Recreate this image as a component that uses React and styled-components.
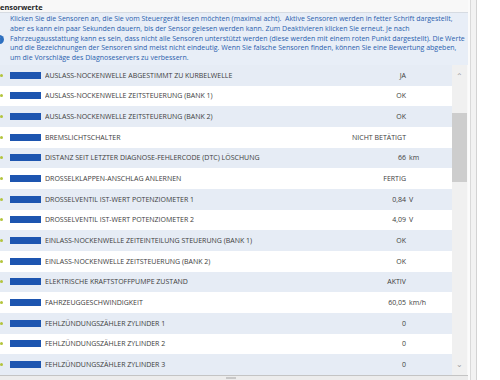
import React from "react";
import styled, { createGlobalStyle } from "styled-components";

const GlobalStyle = createGlobalStyle`
  html, body {
    margin: 0;
    padding: 0;
    width: 500px;
    height: 380px;
    overflow: hidden;
    background: #f3f3f3;
  }
  * { box-sizing: border-box; }
`;

const infoLines = [
  "Klicken Sie die Sensoren an, die Sie vom Steuergerät lesen möchten (maximal acht).\u00a0 Aktive Sensoren werden in fetter Schrift dargestellt,",
  "aber es kann ein paar Sekunden dauern, bis der Sensor gelesen werden kann. Zum Deaktivieren klicken Sie erneut. Je nach",
  "Fahrzeugausstattung kann es sein, dass nicht alle Sensoren unterstützt werden (diese werden mit einem roten Punkt dargestellt). Die Werte",
  "und die Bezeichnungen der Sensoren sind meist nicht eindeutig. Wenn Sie falsche Sensoren finden, können Sie eine Bewertung abgeben,",
  "um die Vorschläge des Diagnoseservers zu verbessern.",
];

const sensors = [
  { name: "AUSLASS-NOCKENWELLE ABGESTIMMT ZU KURBELWELLE", value: "JA" },
  { name: "AUSLASS-NOCKENWELLE ZEITSTEUERUNG (BANK 1)", value: "OK" },
  { name: "AUSLASS-NOCKENWELLE ZEITSTEUERUNG (BANK 2)", value: "OK" },
  { name: "BREMSLICHTSCHALTER", value: "NICHT BETÄTIGT" },
  { name: "DISTANZ SEIT LETZTER DIAGNOSE-FEHLERCODE (DTC) LÖSCHUNG", value: "66", unit: "km" },
  { name: "DROSSELKLAPPEN-ANSCHLAG ANLERNEN", value: "FERTIG" },
  { name: "DROSSELVENTIL IST-WERT POTENZIOMETER 1", value: "0,84", unit: "V" },
  { name: "DROSSELVENTIL IST-WERT POTENZIOMETER 2", value: "4,09", unit: "V" },
  { name: "EINLASS-NOCKENWELLE ZEITEINTEILUNG STEUERUNG (BANK 1)", value: "OK" },
  { name: "EINLASS-NOCKENWELLE ZEITSTEUERUNG (BANK 2)", value: "OK" },
  { name: "ELEKTRISCHE KRAFTSTOFFPUMPE ZUSTAND", value: "AKTIV" },
  { name: "FAHRZEUGGESCHWINDIGKEIT", value: "60,05", unit: "km/h" },
  { name: "FEHLZÜNDUNGSZÄHLER ZYLINDER 1", value: "0" },
  { name: "FEHLZÜNDUNGSZÄHLER ZYLINDER 2", value: "0" },
  { name: "FEHLZÜNDUNGSZÄHLER ZYLINDER 3", value: "0" },
];

const App = () => {
  return (
    <>
      <GlobalStyle />
      <Page>
        <Main>
          <Header>Sensorwerte</Header>
          <InfoBox>
            <InfoIcon viewBox="0 0 10 10">
              <circle cx="5" cy="5" r="5" fill="#2d6fc0" />
              <rect x="4.4" y="4.2" width="1.2" height="3.6" fill="#fff" />
              <circle cx="5" cy="2.8" r="0.7" fill="#fff" />
            </InfoIcon>
            <InfoText>
              {infoLines.map((line) => (
                <InfoLine key={line}>{line}</InfoLine>
              ))}
            </InfoText>
          </InfoBox>
          <TableArea>
            <Rows>
              {sensors.map((s, i) => (
                <Row key={s.name} $alt={i % 2 === 0}>
                  <Dot />
                  <Bar />
                  <Label>{s.name}</Label>
                  <Value>{s.value}</Value>
                  <Unit>{s.unit}</Unit>
                </Row>
              ))}
            </Rows>
            <Scrollbar>
              <Arrow>&#8963;</Arrow>
              <Track>
                <Thumb />
              </Track>
              <Arrow $down>&#8964;</Arrow>
            </Scrollbar>
          </TableArea>
          <Footer>
            <Grip />
          </Footer>
        </Main>
        <Gutter />
        <SidePanel />
      </Page>
    </>
  );
};

export default App;

const Page = styled.div`
  display: flex;
  width: 506px;
  height: 380px;
  margin-left: -6px;
  font-family: "Open Sans", "Noto Sans", sans-serif;
`;

const Main = styled.div`
  display: flex;
  flex-direction: column;
  width: 474px;
  height: 380px;
  background: #f8f8f8;
`;

const Header = styled.div`
  height: 13px;
  padding-left: 2px;
  font-size: 7.4px;
  font-weight: bold;
  line-height: 15px;
  color: #1e1e1e;
  border-bottom: 1px solid #d6dbe2;
`;

const InfoBox = styled.div`
  display: flex;
  align-items: flex-start;
  height: 52px;
  background: #e8eef7;
  padding: 1px 0 0 1px;
`;

const InfoIcon = styled.svg`
  width: 9px;
  height: 9px;
  margin-top: 21px;
  flex-shrink: 0;
`;

const InfoText = styled.div`
  display: flex;
  flex-direction: column;
  margin-left: 6px;
  font-size: 7px;
  line-height: 9.8px;
  color: #2a5fae;
`;

const InfoLine = styled.div`
  white-space: nowrap;
`;

const TableArea = styled.div`
  display: flex;
  height: 310px;
`;

const Rows = styled.div`
  display: flex;
  flex-direction: column;
  width: 458px;
`;

const Row = styled.div`
  display: grid;
  grid-template-columns: 16px 35px 1fr 82px 46px;
  align-items: center;
  height: 20.67px;
  flex-shrink: 0;
  background: ${(p) => (p.$alt ? "#e6ecf5" : "#ffffff")};
  font-size: 7px;
  color: #3c3c3c;
`;

const Dot = styled.span`
  width: 3px;
  height: 3px;
  margin-left: 6px;
  border-radius: 50%;
  background: #b3c43c;
`;

const Bar = styled.span`
  width: 31px;
  height: 7px;
  background: #1d55b0;
`;

const Label = styled.span`
  white-space: nowrap;
  overflow: hidden;
`;

const Value = styled.span`
  text-align: right;
  white-space: nowrap;
`;

const Unit = styled.span`
  padding-left: 3px;
  white-space: nowrap;
`;

const Scrollbar = styled.div`
  display: flex;
  flex-direction: column;
  width: 15px;
  background: #f0f0f0;
`;

const Arrow = styled.div`
  height: 14px;
  font-size: 8px;
  line-height: ${(p) => (p.$down ? "6px" : "22px")};
  text-align: center;
  color: #a0a0a0;
`;

const Track = styled.div`
  flex: 1;
  padding-top: 34px;
`;

const Thumb = styled.div`
  height: 69px;
  background: #cdcdcd;
`;

const Footer = styled.div`
  flex: 1;
  display: flex;
  justify-content: center;
  background: #ececec;
  border-top: 1px solid #c4c4c4;
`;

const Grip = styled.div`
  width: 10px;
  height: 2px;
  margin-top: 1px;
  background: #c8c8c8;
`;

const Gutter = styled.div`
  width: 9px;
  background: #f2f2f2;
  border-left: 2px solid #fbfbfb;
  border-right: 1px solid #d2d2d2;
  box-shadow: inset 1px 0 0 #d9d9d9;
`;

const SidePanel = styled.div`
  flex: 1;
  background: #ffffff;
`;
